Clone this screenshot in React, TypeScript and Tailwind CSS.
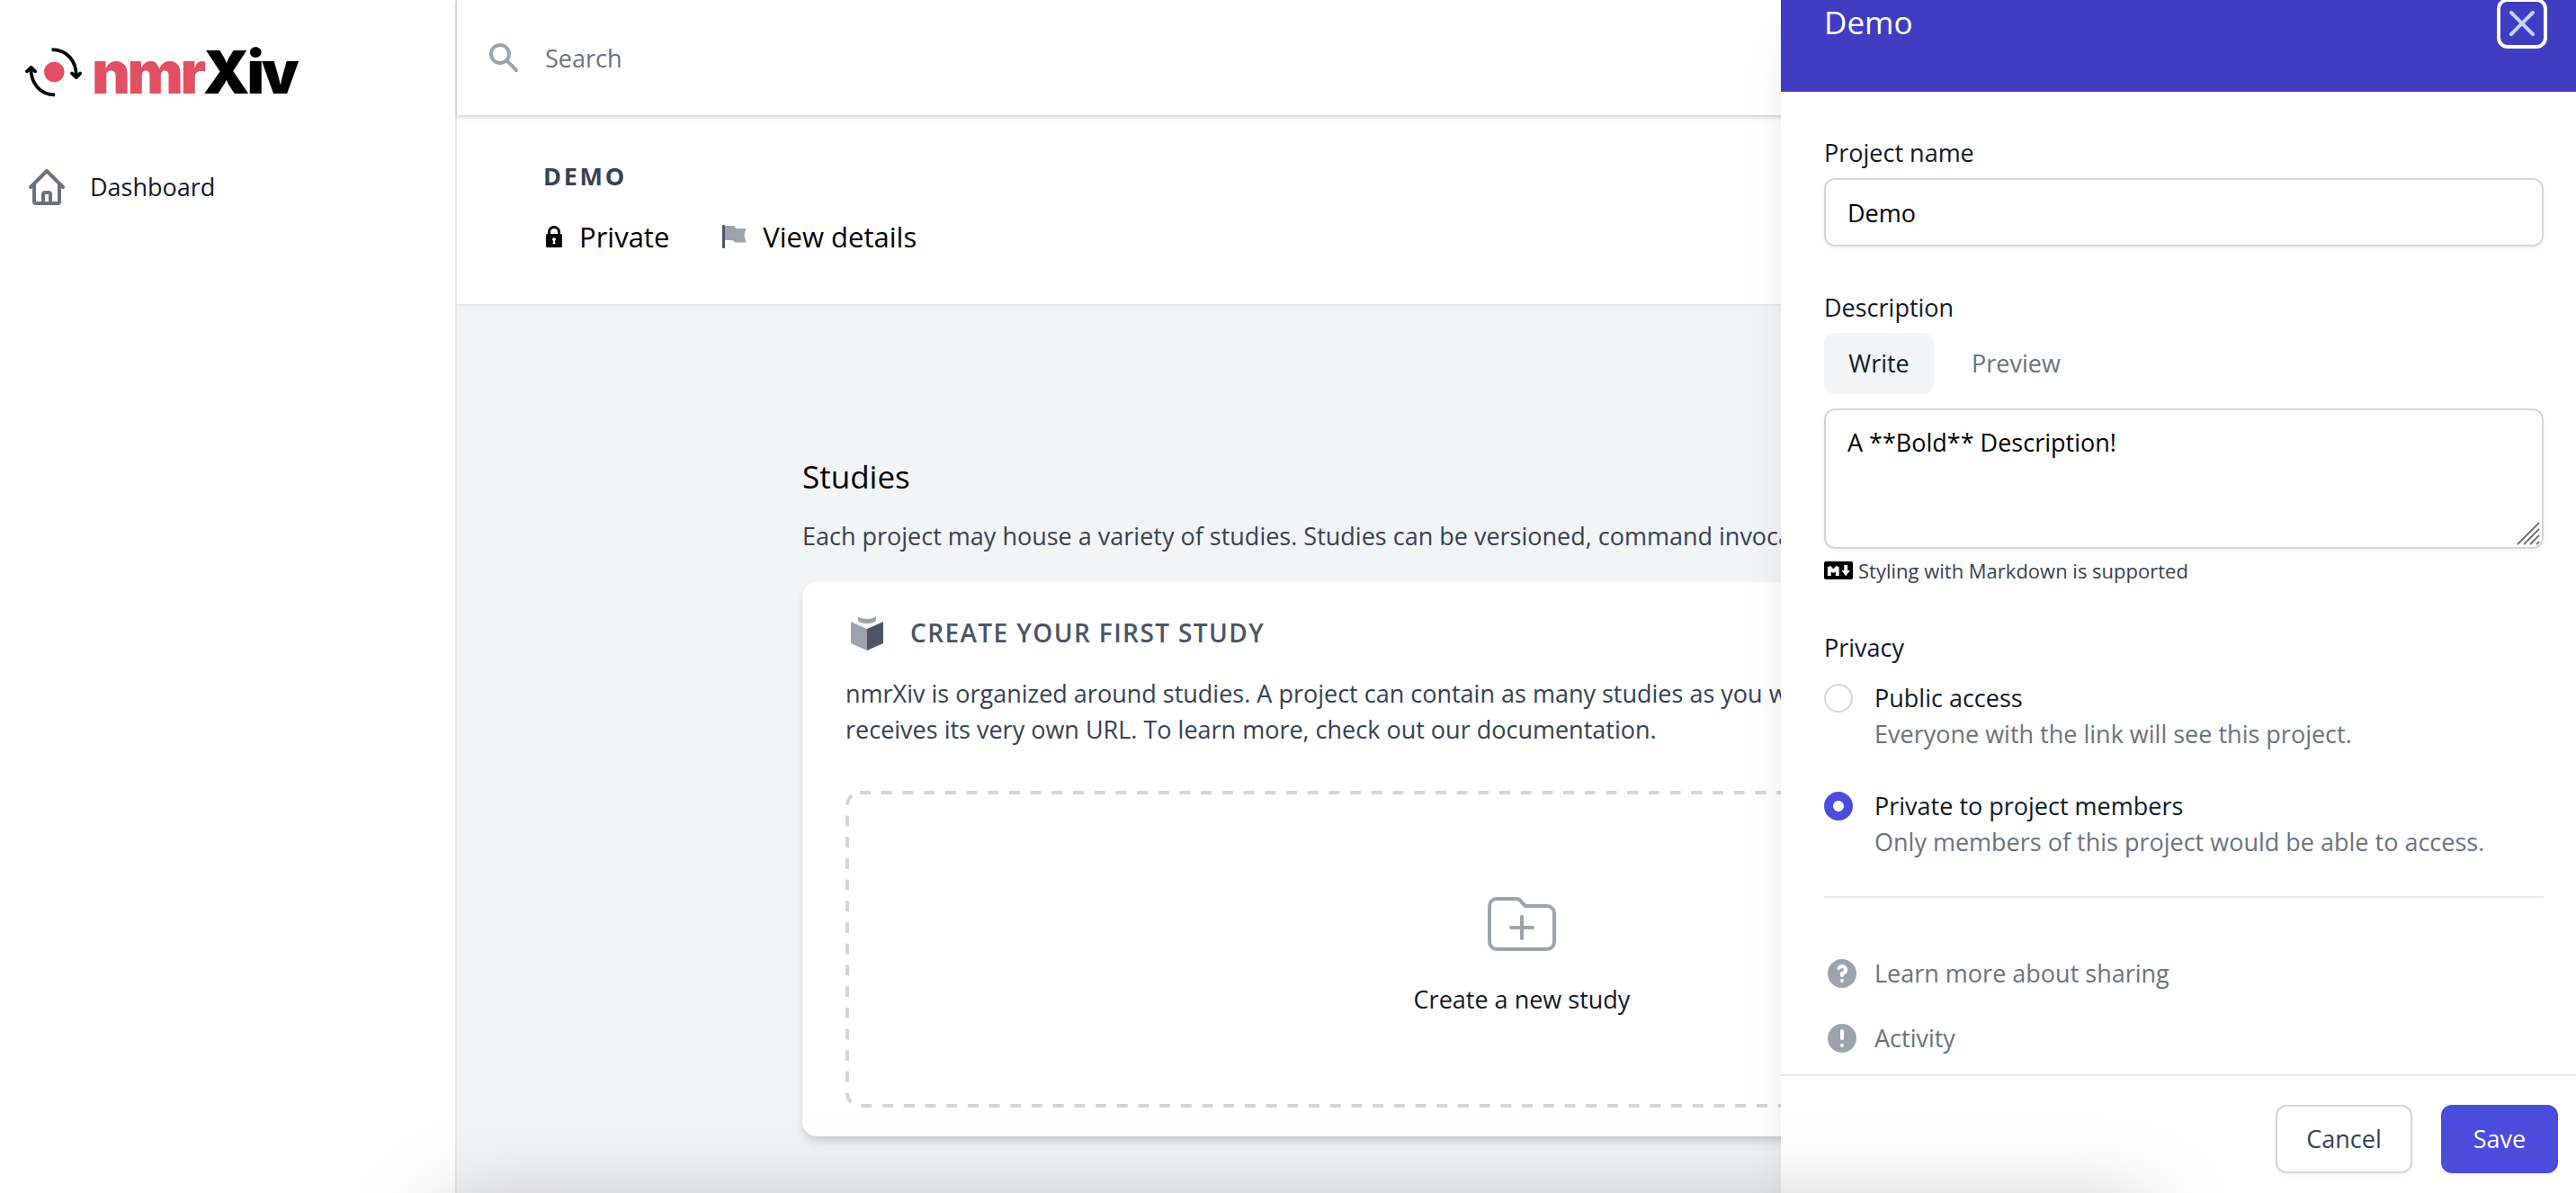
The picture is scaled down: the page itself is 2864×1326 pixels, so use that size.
import type { ReactNode } from "react";

function LogoMark() {
  return (
    <svg viewBox="0 0 64 56" className="h-14 w-16" fill="none" aria-hidden="true">
      <circle cx="32.3" cy="28" r="11.2" fill="#e34f62" />
      <g stroke="#000" strokeWidth="3.8" strokeLinejoin="round">
        <path d="M29.5 3.2C46 3.2 57 15 56.8 33" />
        <path d="M52 29.5l4.8 4.6 4.4-4.6" strokeLinecap="round" />
        <path d="M33 53.3C17 53.3 6 41 6.4 23" />
        <path d="M2 27.3l4.6-4.3 4.6 4.3" strokeLinecap="round" />
      </g>
    </svg>
  );
}

function HomeIcon() {
  return (
    <svg viewBox="0 0 24 24" className="size-12 text-gray-500" fill="none" stroke="currentColor" strokeWidth="2" strokeLinecap="round" strokeLinejoin="round" aria-hidden="true">
      <path d="M3 12l2-2m0 0l7-7 7 7M5 10v10a1 1 0 001 1h3m10-11l2 2m-2-2v10a1 1 0 01-1 1h-3m-6 0a1 1 0 001-1v-4a1 1 0 011-1h2a1 1 0 011 1v4a1 1 0 001 1m-6 0h6" />
    </svg>
  );
}

function SearchIcon() {
  return (
    <svg viewBox="0 0 20 20" className="size-10 text-[#9ca3af]" fill="currentColor" fillRule="evenodd" aria-hidden="true">
      <path d="M8 4a4 4 0 100 8 4 4 0 000-8zM2 8a6 6 0 1110.89 3.476l4.817 4.817a1 1 0 01-1.414 1.414l-4.816-4.816A6 6 0 012 8z" />
    </svg>
  );
}

function LockIcon() {
  return (
    <svg viewBox="0 0 24 28" className="h-7 w-6" aria-hidden="true">
      <path d="M6.5 13V9a5.5 5.5 0 0111 0v4" fill="none" stroke="#000" strokeWidth="3" />
      <rect x="3" y="11" width="18" height="15" rx="1.5" fill="#000" />
      <path d="M12 15a2 2 0 011 3.7L13.4 22h-2.8l.4-3.3A2 2 0 0112 15z" fill="#fff" />
    </svg>
  );
}

function FlagIcon() {
  return (
    <svg viewBox="0 0 32 32" className="size-8" aria-hidden="true">
      <path d="M5 4h11l2.500 3h11l-2.300 7.500L29.500 22.500H17l-2.500-2.500H5z" fill="#9ca3af" />
      <rect x="3" y="3" width="3" height="26" rx="1" fill="#4b5563" />
    </svg>
  );
}

function BoxIcon() {
  return (
    <svg viewBox="0 0 48 48" className="size-12" aria-hidden="true">
      <path d="M14 6.500c4 3.300 16 3.300 20 0v3.500c0 5.300-20 5.300-20 0z" fill="#9ca3af" />
      <path d="M6 12l18 8v24L6 36z" fill="#9ca3af" />
      <path d="M42 12l-18 8v24l18-8z" fill="#4b5563" />
    </svg>
  );
}

function FolderIcon() {
  return (
    <svg viewBox="0 0 24 24" className="size-24 text-[#9ca3af]" fill="none" stroke="currentColor" strokeWidth="1" strokeLinecap="round" strokeLinejoin="round" aria-hidden="true">
      <path d="M9 13h6m-3-3v6m-9 1V7a2 2 0 012-2h6l2 2h6a2 2 0 012 2v8a2 2 0 01-2 2H5a2 2 0 01-2-2z" />
    </svg>
  );
}

function MarkdownIcon() {
  return (
    <svg viewBox="0 0 32 20" className="h-5 w-8" fill="none" aria-hidden="true">
      <rect width="32" height="20" rx="2" fill="#000" />
      <path d="M5.800 16V6.200l4.500 5 4.500-5V16" stroke="#fff" strokeWidth="3.800" strokeLinejoin="bevel" />
      <path d="M22.300 4h3.800v6H29l-4.800 6.200-4.800-6.200h2.900z" fill="#fff" />
    </svg>
  );
}

function CircleIcon({ d }: { d: string }) {
  return (
    <svg viewBox="0 0 20 20" className="size-10 text-[#9ca3af]" fill="currentColor" fillRule="evenodd" aria-hidden="true">
      <path d={d} />
    </svg>
  );
}

const QUESTION =
  "M18 10a8 8 0 11-16 0 8 8 0 0116 0zm-8-3a1 1 0 00-.867.5 1 1 0 11-1.731-1A3 3 0 0113 8a3.001 3.001 0 01-2 2.83V11a1 1 0 11-2 0v-1a1 1 0 011-1 1 1 0 100-2zm0 8a1 1 0 100-2 1 1 0 000 2z";
const EXCLAMATION =
  "M18 10a8 8 0 11-16 0 8 8 0 0116 0zm-7 4a1 1 0 11-2 0 1 1 0 012 0zm-1-9a1 1 0 00-1 1v4a1 1 0 102 0V6a1 1 0 00-1-1z";

function Sidebar() {
  return (
    <aside className="flex w-[508px] shrink-0 flex-col gap-[76px] border-r-2 border-gray-200 bg-white px-7 pt-[52px]">
      <a href="#home" className="flex h-14 items-center gap-2.5">
        <LogoMark />
        <span className="font-[Inter] text-[66px] leading-none font-black tracking-tighter text-black">
          <span className="text-[#e34f62]">nmr</span>Xiv
        </span>
      </a>
      <nav>
        <a href="#dashboard" className="flex items-center gap-6">
          <HomeIcon />
          Dashboard
        </a>
      </nav>
    </aside>
  );
}

function TopBar() {
  return (
    <header className="relative z-10 flex h-32 shrink-0 items-center gap-[26px] bg-white px-8 shadow-[0_2px_6px_rgba(0,0,0,0.12),0_2px_4px_rgba(0,0,0,0.08)]">
      <SearchIcon />
      <input type="search" aria-label="Search" placeholder="Search" className="h-full flex-1 outline-none placeholder:text-gray-500" />
    </header>
  );
}

function ProjectHeader() {
  return (
    <section className="shrink-0 border-b-2 border-gray-200 bg-white px-24 pt-12 pb-[52px]">
      <h1 className="font-bold tracking-widest text-gray-700 uppercase">Demo</h1>
      <div className="mt-6 flex items-center gap-14 text-[31px] leading-[46px] text-black">
        <span className="flex items-center gap-4">
          <LockIcon />
          Private
        </span>
        <a href="#details" className="flex items-center gap-4">
          <FlagIcon />
          View details
        </a>
      </div>
    </section>
  );
}

function Studies() {
  return (
    <main className="flex-1 bg-[#f3f4f6] pt-[162px] pl-3">
      <div className="mx-auto w-full max-w-[1600px]">
        <h2 className="text-[35px] leading-14 text-black">Studies</h2>
        <p className="mt-[18px] text-gray-700">
          Each project may house a variety of studies. Studies can be versioned, command invocations.
        </p>
        <div className="mt-[31px] rounded-2xl bg-white px-12 py-8 shadow-[0_8px_12px_-2px_rgba(0,0,0,0.12),0_4px_8px_-2px_rgba(0,0,0,0.08)]">
          <h3 className="flex items-center gap-6 text-[28px] font-semibold tracking-wider text-gray-600 uppercase">
            <BoxIcon />
            Create your first study
          </h3>
          <p className="mt-6 text-gray-700">
            nmrXiv is organized around studies. A project can contain as many studies as you wish. It
            <br />
            receives its very own URL. To learn more, check out our documentation.
          </p>
          <button type="button" className="relative mt-12 flex w-full flex-col items-center rounded-2xl py-[100px]">
            <svg className="absolute inset-0 size-full" fill="none" aria-hidden="true">
              <g className="[&>rect]:h-[calc(100%-4px)] [&>rect]:w-[calc(100%-4px)]">
                <rect x="2" y="2" rx="14" stroke="#d1d5db" strokeWidth="4" strokeDasharray="12 11.7" />
              </g>
            </svg>
            <FolderIcon />
            <span className="mt-4">Create a new study</span>
          </button>
        </div>
      </div>
    </main>
  );
}

function PrivacyOption({ id, title, note, checked }: { id: string; title: string; note: string; checked?: boolean }) {
  return (
    <div className="flex gap-6">
      <input
        type="radio"
        id={id}
        name="privacy"
        defaultChecked={checked}
        className="mt-1 size-8 appearance-none rounded-full border-2 border-gray-300 bg-white checked:border-[10px] checked:border-[#4b4cdc]"
      />
      <label htmlFor={id}>
        {title}
        <span className="block text-gray-500">{note}</span>
      </label>
    </div>
  );
}

function DrawerLink({ icon, children }: { icon: string; children: ReactNode }) {
  return (
    <a href="#more" className="flex items-center gap-4 text-gray-500">
      <CircleIcon d={icon} />
      {children}
    </a>
  );
}

function Drawer() {
  return (
    <form className="absolute inset-y-0 right-0 z-20 flex w-[884px] flex-col bg-white shadow-[0_40px_50px_-10px_rgba(0,0,0,0.1),0_20px_20px_-10px_rgba(0,0,0,0.04)]">
      <div className="flex h-[102px] shrink-0 items-start justify-between bg-[#403dc2] pr-9 pl-12 text-white">
        <h2 className="text-[35px] leading-[50px]">Demo</h2>
        <button type="button" aria-label="Close panel" className="mt-0.5 size-12 rounded-lg text-indigo-200 ring-4 ring-white">
          <svg viewBox="0 0 24 24" className="size-12" fill="none" stroke="currentColor" strokeWidth="2" strokeLinecap="round" aria-hidden="true">
            <path d="M6 18L18 6M6 6l12 12" />
          </svg>
        </button>
      </div>

      <div className="min-h-0 flex-1 overflow-hidden pt-12 pr-9 pl-12">
        <label htmlFor="name" className="block">
          Project name
        </label>
        <input
          id="name"
          defaultValue="Demo"
          className="mt-2 block h-[76px] w-full rounded-xl border-2 border-gray-300 px-6 text-black shadow-[0_2px_4px_rgba(0,0,0,0.05)] outline-none"
        />

        <label htmlFor="description" className="mt-12 block">
          Description
        </label>
        <div className="mt-2 flex gap-4">
          <button type="button" className="h-[68px] w-[122px] rounded-xl bg-gray-100">
            Write
          </button>
          <button type="button" className="h-[68px] rounded-xl px-[26px] text-gray-500">
            Preview
          </button>
        </div>
        <div className="relative mt-4">
          <textarea
            id="description"
            defaultValue="A **Bold** Description!"
            className="block h-[156px] w-full resize-none rounded-xl border-2 border-gray-300 px-6 py-4 text-black shadow-[0_2px_4px_rgba(0,0,0,0.05)] outline-none"
          />
          <svg viewBox="0 0 26 26" className="absolute right-1 bottom-1 size-[26px]" stroke="#6f6f6f" strokeWidth="1.8" aria-hidden="true">
            <path d="M1 25L25 1M8 25L25 8M15 25l10-10M22 25l3-3" />
          </svg>
        </div>
        <p className="mt-2.5 flex items-center gap-1.5 text-[22px] leading-7 text-gray-700">
          <MarkdownIcon />
          Styling with Markdown is supported
        </p>

        <fieldset className="mt-[52px]">
          <legend className="block">Privacy</legend>
          <div className="mt-4 flex flex-col gap-10">
            <PrivacyOption id="public" title="Public access" note="Everyone with the link will see this project." />
            <PrivacyOption
              id="private"
              title="Private to project members"
              note="Only members of this project would be able to access."
              checked
            />
          </div>
        </fieldset>

        <div className="mt-10 flex flex-col gap-8 border-t-2 border-gray-200 pt-16">
          <DrawerLink icon={QUESTION}>Learn more about sharing</DrawerLink>
          <DrawerLink icon={EXCLAMATION}>Activity</DrawerLink>
        </div>
      </div>

      <div className="flex shrink-0 justify-end gap-8 border-t-2 border-gray-200 pt-8 pr-5 pb-[22px]">
        <button type="button" className="h-[76px] w-[152px] rounded-xl border-2 border-gray-300 bg-white text-gray-700 shadow-[0_2px_4px_rgba(0,0,0,0.05)]">
          Cancel
        </button>
        <button type="submit" className="h-[76px] w-[130px] rounded-xl bg-[#4b4cdc] text-white shadow-[0_2px_4px_rgba(0,0,0,0.05)]">
          Save
        </button>
      </div>
    </form>
  );
}

export default function App() {
  return (
    <div className="relative flex h-screen overflow-hidden bg-white font-['Open_Sans',sans-serif] text-[27px] leading-10 text-gray-900">
      <Sidebar />
      <div className="flex min-w-0 flex-1 flex-col">
        <TopBar />
        <ProjectHeader />
        <Studies />
      </div>
      <Drawer />
      <div className="pointer-events-none absolute top-full right-[479px] left-[490px] z-30 h-48 shadow-[0_20px_100px_rgba(0,0,0,0.25)]" />
    </div>
  );
}
